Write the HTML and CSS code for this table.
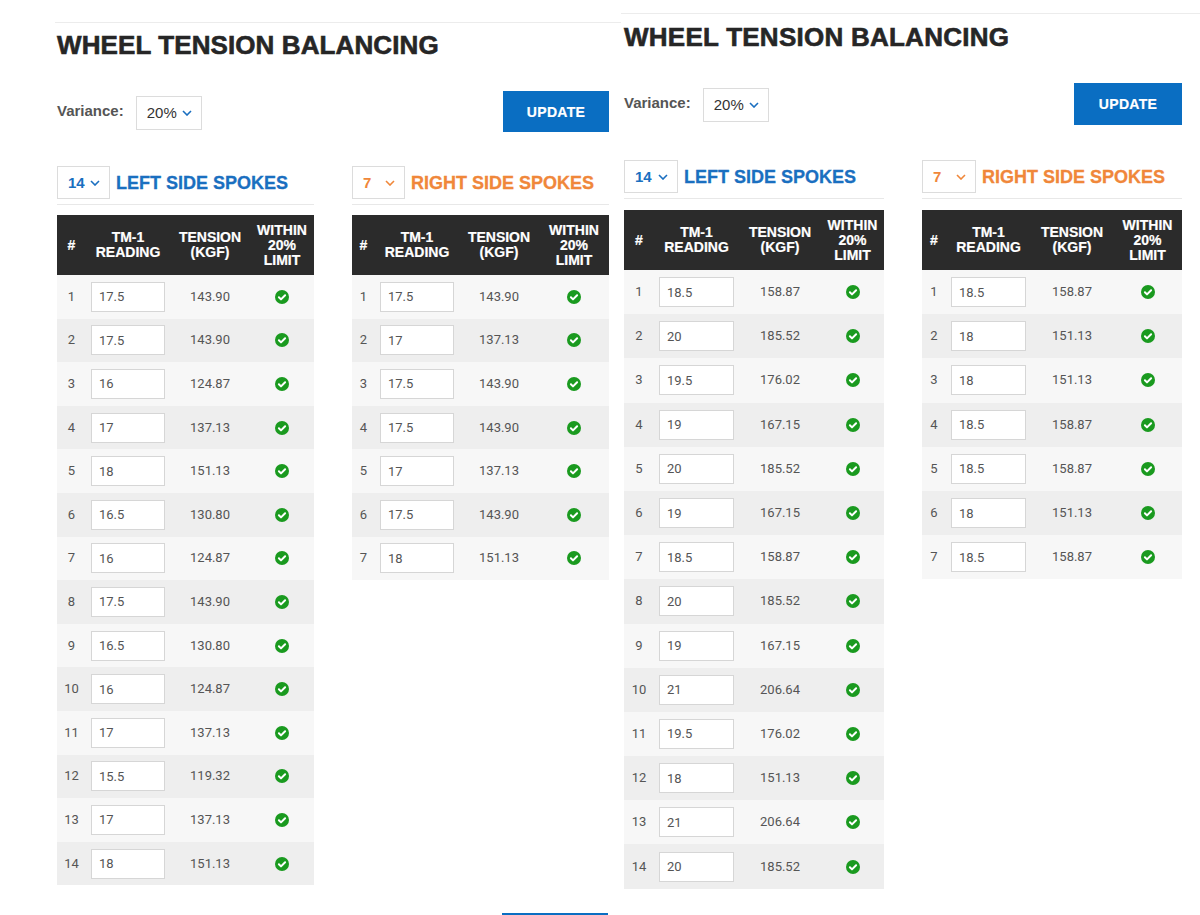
FILE: index.html
```html
<!DOCTYPE html>
<html lang="en">
<head>
<meta charset="utf-8">
<title>Wheel Tension Balancing</title>
<link rel="stylesheet" href="styles.css">
</head>
<body>
<div class="screens">

  <section class="screen screen-a">
    <div class="page">
      <h1 class="title">WHEEL TENSION BALANCING</h1>
      <div class="controls">
        <div class="variance">
          <span class="variance-label">Variance:</span>
          <div class="select select-variance"><span>20%</span><svg class="chev" width="10" height="6" viewBox="0 0 10 6"><path d="M1 1l4 4 4-4"/></svg></div>
        </div>
        <button class="btn-update">UPDATE</button>
      </div>
      <div class="sides">
        <div class="side side-left">
          <div class="side-head">
            <div class="select select-count"><span>14</span><svg class="chev" width="10" height="6" viewBox="0 0 10 6"><path d="M1 1l4 4 4-4"/></svg></div>
            <h2 class="side-title">LEFT SIDE SPOKES</h2>
          </div>
          <div class="spoke-table">
            <div class="thead"><div>#</div><div>TM-1<br>READING</div><div>TENSION<br>(KGF)</div><div>WITHIN<br>20%<br>LIMIT</div></div>
            <div class="tbody">
              <div class="row"><div class="c-num">1</div><div class="c-read"><input class="reading" type="text" value="17.5"></div><div class="c-ten">143.90</div><div class="c-ok"><svg class="ok" width="14" height="14" viewBox="0 0 14 14"><circle cx="7" cy="7" r="7"/><path d="M3.9 7.3l2.1 2.1 4.1-4.2"/></svg></div></div>
              <div class="row"><div class="c-num">2</div><div class="c-read"><input class="reading" type="text" value="17.5"></div><div class="c-ten">143.90</div><div class="c-ok"><svg class="ok" width="14" height="14" viewBox="0 0 14 14"><circle cx="7" cy="7" r="7"/><path d="M3.9 7.3l2.1 2.1 4.1-4.2"/></svg></div></div>
              <div class="row"><div class="c-num">3</div><div class="c-read"><input class="reading" type="text" value="16"></div><div class="c-ten">124.87</div><div class="c-ok"><svg class="ok" width="14" height="14" viewBox="0 0 14 14"><circle cx="7" cy="7" r="7"/><path d="M3.9 7.3l2.1 2.1 4.1-4.2"/></svg></div></div>
              <div class="row"><div class="c-num">4</div><div class="c-read"><input class="reading" type="text" value="17"></div><div class="c-ten">137.13</div><div class="c-ok"><svg class="ok" width="14" height="14" viewBox="0 0 14 14"><circle cx="7" cy="7" r="7"/><path d="M3.9 7.3l2.1 2.1 4.1-4.2"/></svg></div></div>
              <div class="row"><div class="c-num">5</div><div class="c-read"><input class="reading" type="text" value="18"></div><div class="c-ten">151.13</div><div class="c-ok"><svg class="ok" width="14" height="14" viewBox="0 0 14 14"><circle cx="7" cy="7" r="7"/><path d="M3.9 7.3l2.1 2.1 4.1-4.2"/></svg></div></div>
              <div class="row"><div class="c-num">6</div><div class="c-read"><input class="reading" type="text" value="16.5"></div><div class="c-ten">130.80</div><div class="c-ok"><svg class="ok" width="14" height="14" viewBox="0 0 14 14"><circle cx="7" cy="7" r="7"/><path d="M3.9 7.3l2.1 2.1 4.1-4.2"/></svg></div></div>
              <div class="row"><div class="c-num">7</div><div class="c-read"><input class="reading" type="text" value="16"></div><div class="c-ten">124.87</div><div class="c-ok"><svg class="ok" width="14" height="14" viewBox="0 0 14 14"><circle cx="7" cy="7" r="7"/><path d="M3.9 7.3l2.1 2.1 4.1-4.2"/></svg></div></div>
              <div class="row"><div class="c-num">8</div><div class="c-read"><input class="reading" type="text" value="17.5"></div><div class="c-ten">143.90</div><div class="c-ok"><svg class="ok" width="14" height="14" viewBox="0 0 14 14"><circle cx="7" cy="7" r="7"/><path d="M3.9 7.3l2.1 2.1 4.1-4.2"/></svg></div></div>
              <div class="row"><div class="c-num">9</div><div class="c-read"><input class="reading" type="text" value="16.5"></div><div class="c-ten">130.80</div><div class="c-ok"><svg class="ok" width="14" height="14" viewBox="0 0 14 14"><circle cx="7" cy="7" r="7"/><path d="M3.9 7.3l2.1 2.1 4.1-4.2"/></svg></div></div>
              <div class="row"><div class="c-num">10</div><div class="c-read"><input class="reading" type="text" value="16"></div><div class="c-ten">124.87</div><div class="c-ok"><svg class="ok" width="14" height="14" viewBox="0 0 14 14"><circle cx="7" cy="7" r="7"/><path d="M3.9 7.3l2.1 2.1 4.1-4.2"/></svg></div></div>
              <div class="row"><div class="c-num">11</div><div class="c-read"><input class="reading" type="text" value="17"></div><div class="c-ten">137.13</div><div class="c-ok"><svg class="ok" width="14" height="14" viewBox="0 0 14 14"><circle cx="7" cy="7" r="7"/><path d="M3.9 7.3l2.1 2.1 4.1-4.2"/></svg></div></div>
              <div class="row"><div class="c-num">12</div><div class="c-read"><input class="reading" type="text" value="15.5"></div><div class="c-ten">119.32</div><div class="c-ok"><svg class="ok" width="14" height="14" viewBox="0 0 14 14"><circle cx="7" cy="7" r="7"/><path d="M3.9 7.3l2.1 2.1 4.1-4.2"/></svg></div></div>
              <div class="row"><div class="c-num">13</div><div class="c-read"><input class="reading" type="text" value="17"></div><div class="c-ten">137.13</div><div class="c-ok"><svg class="ok" width="14" height="14" viewBox="0 0 14 14"><circle cx="7" cy="7" r="7"/><path d="M3.9 7.3l2.1 2.1 4.1-4.2"/></svg></div></div>
              <div class="row"><div class="c-num">14</div><div class="c-read"><input class="reading" type="text" value="18"></div><div class="c-ten">151.13</div><div class="c-ok"><svg class="ok" width="14" height="14" viewBox="0 0 14 14"><circle cx="7" cy="7" r="7"/><path d="M3.9 7.3l2.1 2.1 4.1-4.2"/></svg></div></div>
            </div>
          </div>
        </div>

        <div class="side side-right">
          <div class="side-head">
            <div class="select select-count"><span>7</span><svg class="chev" width="10" height="6" viewBox="0 0 10 6"><path d="M1 1l4 4 4-4"/></svg></div>
            <h2 class="side-title">RIGHT SIDE SPOKES</h2>
          </div>
          <div class="spoke-table">
            <div class="thead"><div>#</div><div>TM-1<br>READING</div><div>TENSION<br>(KGF)</div><div>WITHIN<br>20%<br>LIMIT</div></div>
            <div class="tbody">
              <div class="row"><div class="c-num">1</div><div class="c-read"><input class="reading" type="text" value="17.5"></div><div class="c-ten">143.90</div><div class="c-ok"><svg class="ok" width="14" height="14" viewBox="0 0 14 14"><circle cx="7" cy="7" r="7"/><path d="M3.9 7.3l2.1 2.1 4.1-4.2"/></svg></div></div>
              <div class="row"><div class="c-num">2</div><div class="c-read"><input class="reading" type="text" value="17"></div><div class="c-ten">137.13</div><div class="c-ok"><svg class="ok" width="14" height="14" viewBox="0 0 14 14"><circle cx="7" cy="7" r="7"/><path d="M3.9 7.3l2.1 2.1 4.1-4.2"/></svg></div></div>
              <div class="row"><div class="c-num">3</div><div class="c-read"><input class="reading" type="text" value="17.5"></div><div class="c-ten">143.90</div><div class="c-ok"><svg class="ok" width="14" height="14" viewBox="0 0 14 14"><circle cx="7" cy="7" r="7"/><path d="M3.9 7.3l2.1 2.1 4.1-4.2"/></svg></div></div>
              <div class="row"><div class="c-num">4</div><div class="c-read"><input class="reading" type="text" value="17.5"></div><div class="c-ten">143.90</div><div class="c-ok"><svg class="ok" width="14" height="14" viewBox="0 0 14 14"><circle cx="7" cy="7" r="7"/><path d="M3.9 7.3l2.1 2.1 4.1-4.2"/></svg></div></div>
              <div class="row"><div class="c-num">5</div><div class="c-read"><input class="reading" type="text" value="17"></div><div class="c-ten">137.13</div><div class="c-ok"><svg class="ok" width="14" height="14" viewBox="0 0 14 14"><circle cx="7" cy="7" r="7"/><path d="M3.9 7.3l2.1 2.1 4.1-4.2"/></svg></div></div>
              <div class="row"><div class="c-num">6</div><div class="c-read"><input class="reading" type="text" value="17.5"></div><div class="c-ten">143.90</div><div class="c-ok"><svg class="ok" width="14" height="14" viewBox="0 0 14 14"><circle cx="7" cy="7" r="7"/><path d="M3.9 7.3l2.1 2.1 4.1-4.2"/></svg></div></div>
              <div class="row"><div class="c-num">7</div><div class="c-read"><input class="reading" type="text" value="18"></div><div class="c-ten">151.13</div><div class="c-ok"><svg class="ok" width="14" height="14" viewBox="0 0 14 14"><circle cx="7" cy="7" r="7"/><path d="M3.9 7.3l2.1 2.1 4.1-4.2"/></svg></div></div>
            </div>
          </div>
        </div>
      </div>
      <div class="footer"><button class="btn-update">UPDATE</button></div>
    </div>
  </section>

  <section class="screen screen-b">
    <div class="page">
      <h1 class="title">WHEEL TENSION BALANCING</h1>
      <div class="controls">
        <div class="variance">
          <span class="variance-label">Variance:</span>
          <div class="select select-variance"><span>20%</span><svg class="chev" width="10" height="6" viewBox="0 0 10 6"><path d="M1 1l4 4 4-4"/></svg></div>
        </div>
        <button class="btn-update">UPDATE</button>
      </div>
      <div class="sides">
        <div class="side side-left">
          <div class="side-head">
            <div class="select select-count"><span>14</span><svg class="chev" width="10" height="6" viewBox="0 0 10 6"><path d="M1 1l4 4 4-4"/></svg></div>
            <h2 class="side-title">LEFT SIDE SPOKES</h2>
          </div>
          <div class="spoke-table">
            <div class="thead"><div>#</div><div>TM-1<br>READING</div><div>TENSION<br>(KGF)</div><div>WITHIN<br>20%<br>LIMIT</div></div>
            <div class="tbody">
              <div class="row"><div class="c-num">1</div><div class="c-read"><input class="reading" type="text" value="18.5"></div><div class="c-ten">158.87</div><div class="c-ok"><svg class="ok" width="14" height="14" viewBox="0 0 14 14"><circle cx="7" cy="7" r="7"/><path d="M3.9 7.3l2.1 2.1 4.1-4.2"/></svg></div></div>
              <div class="row"><div class="c-num">2</div><div class="c-read"><input class="reading" type="text" value="20"></div><div class="c-ten">185.52</div><div class="c-ok"><svg class="ok" width="14" height="14" viewBox="0 0 14 14"><circle cx="7" cy="7" r="7"/><path d="M3.9 7.3l2.1 2.1 4.1-4.2"/></svg></div></div>
              <div class="row"><div class="c-num">3</div><div class="c-read"><input class="reading" type="text" value="19.5"></div><div class="c-ten">176.02</div><div class="c-ok"><svg class="ok" width="14" height="14" viewBox="0 0 14 14"><circle cx="7" cy="7" r="7"/><path d="M3.9 7.3l2.1 2.1 4.1-4.2"/></svg></div></div>
              <div class="row"><div class="c-num">4</div><div class="c-read"><input class="reading" type="text" value="19"></div><div class="c-ten">167.15</div><div class="c-ok"><svg class="ok" width="14" height="14" viewBox="0 0 14 14"><circle cx="7" cy="7" r="7"/><path d="M3.9 7.3l2.1 2.1 4.1-4.2"/></svg></div></div>
              <div class="row"><div class="c-num">5</div><div class="c-read"><input class="reading" type="text" value="20"></div><div class="c-ten">185.52</div><div class="c-ok"><svg class="ok" width="14" height="14" viewBox="0 0 14 14"><circle cx="7" cy="7" r="7"/><path d="M3.9 7.3l2.1 2.1 4.1-4.2"/></svg></div></div>
              <div class="row"><div class="c-num">6</div><div class="c-read"><input class="reading" type="text" value="19"></div><div class="c-ten">167.15</div><div class="c-ok"><svg class="ok" width="14" height="14" viewBox="0 0 14 14"><circle cx="7" cy="7" r="7"/><path d="M3.9 7.3l2.1 2.1 4.1-4.2"/></svg></div></div>
              <div class="row"><div class="c-num">7</div><div class="c-read"><input class="reading" type="text" value="18.5"></div><div class="c-ten">158.87</div><div class="c-ok"><svg class="ok" width="14" height="14" viewBox="0 0 14 14"><circle cx="7" cy="7" r="7"/><path d="M3.9 7.3l2.1 2.1 4.1-4.2"/></svg></div></div>
              <div class="row"><div class="c-num">8</div><div class="c-read"><input class="reading" type="text" value="20"></div><div class="c-ten">185.52</div><div class="c-ok"><svg class="ok" width="14" height="14" viewBox="0 0 14 14"><circle cx="7" cy="7" r="7"/><path d="M3.9 7.3l2.1 2.1 4.1-4.2"/></svg></div></div>
              <div class="row"><div class="c-num">9</div><div class="c-read"><input class="reading" type="text" value="19"></div><div class="c-ten">167.15</div><div class="c-ok"><svg class="ok" width="14" height="14" viewBox="0 0 14 14"><circle cx="7" cy="7" r="7"/><path d="M3.9 7.3l2.1 2.1 4.1-4.2"/></svg></div></div>
              <div class="row"><div class="c-num">10</div><div class="c-read"><input class="reading" type="text" value="21"></div><div class="c-ten">206.64</div><div class="c-ok"><svg class="ok" width="14" height="14" viewBox="0 0 14 14"><circle cx="7" cy="7" r="7"/><path d="M3.9 7.3l2.1 2.1 4.1-4.2"/></svg></div></div>
              <div class="row"><div class="c-num">11</div><div class="c-read"><input class="reading" type="text" value="19.5"></div><div class="c-ten">176.02</div><div class="c-ok"><svg class="ok" width="14" height="14" viewBox="0 0 14 14"><circle cx="7" cy="7" r="7"/><path d="M3.9 7.3l2.1 2.1 4.1-4.2"/></svg></div></div>
              <div class="row"><div class="c-num">12</div><div class="c-read"><input class="reading" type="text" value="18"></div><div class="c-ten">151.13</div><div class="c-ok"><svg class="ok" width="14" height="14" viewBox="0 0 14 14"><circle cx="7" cy="7" r="7"/><path d="M3.9 7.3l2.1 2.1 4.1-4.2"/></svg></div></div>
              <div class="row"><div class="c-num">13</div><div class="c-read"><input class="reading" type="text" value="21"></div><div class="c-ten">206.64</div><div class="c-ok"><svg class="ok" width="14" height="14" viewBox="0 0 14 14"><circle cx="7" cy="7" r="7"/><path d="M3.9 7.3l2.1 2.1 4.1-4.2"/></svg></div></div>
              <div class="row"><div class="c-num">14</div><div class="c-read"><input class="reading" type="text" value="20"></div><div class="c-ten">185.52</div><div class="c-ok"><svg class="ok" width="14" height="14" viewBox="0 0 14 14"><circle cx="7" cy="7" r="7"/><path d="M3.9 7.3l2.1 2.1 4.1-4.2"/></svg></div></div>
            </div>
          </div>
        </div>

        <div class="side side-right">
          <div class="side-head">
            <div class="select select-count"><span>7</span><svg class="chev" width="10" height="6" viewBox="0 0 10 6"><path d="M1 1l4 4 4-4"/></svg></div>
            <h2 class="side-title">RIGHT SIDE SPOKES</h2>
          </div>
          <div class="spoke-table">
            <div class="thead"><div>#</div><div>TM-1<br>READING</div><div>TENSION<br>(KGF)</div><div>WITHIN<br>20%<br>LIMIT</div></div>
            <div class="tbody">
              <div class="row"><div class="c-num">1</div><div class="c-read"><input class="reading" type="text" value="18.5"></div><div class="c-ten">158.87</div><div class="c-ok"><svg class="ok" width="14" height="14" viewBox="0 0 14 14"><circle cx="7" cy="7" r="7"/><path d="M3.9 7.3l2.1 2.1 4.1-4.2"/></svg></div></div>
              <div class="row"><div class="c-num">2</div><div class="c-read"><input class="reading" type="text" value="18"></div><div class="c-ten">151.13</div><div class="c-ok"><svg class="ok" width="14" height="14" viewBox="0 0 14 14"><circle cx="7" cy="7" r="7"/><path d="M3.9 7.3l2.1 2.1 4.1-4.2"/></svg></div></div>
              <div class="row"><div class="c-num">3</div><div class="c-read"><input class="reading" type="text" value="18"></div><div class="c-ten">151.13</div><div class="c-ok"><svg class="ok" width="14" height="14" viewBox="0 0 14 14"><circle cx="7" cy="7" r="7"/><path d="M3.9 7.3l2.1 2.1 4.1-4.2"/></svg></div></div>
              <div class="row"><div class="c-num">4</div><div class="c-read"><input class="reading" type="text" value="18.5"></div><div class="c-ten">158.87</div><div class="c-ok"><svg class="ok" width="14" height="14" viewBox="0 0 14 14"><circle cx="7" cy="7" r="7"/><path d="M3.9 7.3l2.1 2.1 4.1-4.2"/></svg></div></div>
              <div class="row"><div class="c-num">5</div><div class="c-read"><input class="reading" type="text" value="18.5"></div><div class="c-ten">158.87</div><div class="c-ok"><svg class="ok" width="14" height="14" viewBox="0 0 14 14"><circle cx="7" cy="7" r="7"/><path d="M3.9 7.3l2.1 2.1 4.1-4.2"/></svg></div></div>
              <div class="row"><div class="c-num">6</div><div class="c-read"><input class="reading" type="text" value="18"></div><div class="c-ten">151.13</div><div class="c-ok"><svg class="ok" width="14" height="14" viewBox="0 0 14 14"><circle cx="7" cy="7" r="7"/><path d="M3.9 7.3l2.1 2.1 4.1-4.2"/></svg></div></div>
              <div class="row"><div class="c-num">7</div><div class="c-read"><input class="reading" type="text" value="18.5"></div><div class="c-ten">158.87</div><div class="c-ok"><svg class="ok" width="14" height="14" viewBox="0 0 14 14"><circle cx="7" cy="7" r="7"/><path d="M3.9 7.3l2.1 2.1 4.1-4.2"/></svg></div></div>
            </div>
          </div>
        </div>
      </div>
      <div class="footer"><button class="btn-update">UPDATE</button></div>
    </div>
  </section>

</div>
</body>
</html>
```

FILE: styles.css
```css
html, body {
  margin: 0;
  padding: 0;
  background: #ffffff;
  overflow: hidden;
}
body {
  font-family: Roboto, "Liberation Sans", Arial, sans-serif;
  color: #555555;
}

.screens {
  display: flex;
  align-items: flex-start;
  height: 915px;
  overflow: hidden;
}

.screen-a {
  margin-left: 55px;
  width: 566px;
  padding-top: 22px;
  flex: none;
}
.screen-b {
  width: 579px;
  padding-top: 13px;
  flex: none;
}

.page {
  border-top: 1px solid #ececec;
}
.screen-a .page {
  padding: 0 12px 0 2px;
}
.screen-b .page {
  padding: 0 18px 0 3px;
}

.title {
  margin: 7px 0 0;
  font: 700 26px/30px "Liberation Sans", Arial, sans-serif;
  color: #262626;
  letter-spacing: 0.1px;
  -webkit-text-stroke: 0.6px #262626;
}
.screen-b .title {
  margin-top: 8px;
  letter-spacing: 0.25px;
}

.controls {
  display: flex;
  justify-content: space-between;
  align-items: center;
  margin-top: 31px;
}

.variance {
  display: flex;
  align-items: center;
  gap: 12px;
  padding-top: 2px;
}
.variance-label {
  font: 700 15px/18px "Liberation Sans", Arial, sans-serif;
  color: #555555;
  margin-top: -4px;
}

.select {
  display: flex;
  align-items: center;
  justify-content: space-between;
  box-sizing: border-box;
  border: 1px solid #dcdcdc;
  background: #ffffff;
}
.select-variance {
  width: 66px;
  height: 34px;
  padding: 0 9px 0 10px;
  font: 400 15px/18px "Liberation Sans", Arial, sans-serif;
  color: #333333;
}
.select-variance .chev {
  color: #1a6fc0;
}

.chev {
  display: block;
}
.chev path {
  fill: none;
  stroke: currentColor;
  stroke-width: 1.6;
}

.btn-update {
  width: 106px;
  height: 41px;
  padding: 0;
  border: 0;
  background: #0a6ec2;
  color: #ffffff;
  font: 700 14px/16px "Liberation Sans", Arial, sans-serif;
  letter-spacing: 0.3px;
  -webkit-text-stroke: 0.2px #ffffff;
}
.screen-b .btn-update {
  width: 108px;
  height: 42px;
}

.sides {
  display: flex;
  gap: 38px;
  margin-top: 34px;
}
.screen-b .sides {
  margin-top: 35px;
}

.side {
  width: 257px;
  flex: none;
}
.screen-b .side {
  width: 260px;
}
.side-left {
  color: #1a6fc0;
}
.side-right {
  color: #f0873a;
}

.side-head {
  display: flex;
  align-items: center;
  gap: 6px;
  padding-bottom: 5px;
  border-bottom: 1px solid #e8e8e8;
  margin-bottom: 10px;
}
.screen-b .side-head {
  margin-bottom: 11px;
}

.select-count {
  width: 53px;
  height: 33px;
  padding: 0 9px 0 10px;
  font: 700 15px/18px "Liberation Sans", Arial, sans-serif;
}
.screen-b .select-count {
  width: 54px;
}

.side-title {
  margin: 0;
  font: 700 18px/20px "Liberation Sans", Arial, sans-serif;
  -webkit-text-stroke: 0.3px currentColor;
}

.spoke-table {
  --cols: 29px 84px 80px 64px;
  --row-h: 43.6px;
  --input-w: 74px;
}
.screen-a .side-right .spoke-table {
  --cols: 23px 84px 80px 70px;
}
.screen-b .side-left .spoke-table {
  --cols: 30px 85px 82px 63px;
  --row-h: 44.2px;
  --input-w: 75px;
}
.screen-b .side-right .spoke-table {
  --cols: 24px 85px 82px 69px;
  --row-h: 44.2px;
  --input-w: 75px;
}

.thead {
  display: grid;
  grid-template-columns: var(--cols);
  align-items: center;
  height: 60px;
  background: #2b2b2b;
  color: #ffffff;
  font: 700 14px/15px "Liberation Sans", Arial, sans-serif;
  text-align: center;
  -webkit-text-stroke: 0.2px #ffffff;
}

.row {
  display: grid;
  grid-template-columns: var(--cols);
  align-items: center;
  height: var(--row-h);
  font: 400 13px/16px Roboto, "Liberation Sans", Arial, sans-serif;
  color: #555555;
}
.row:nth-child(odd) {
  background: #f7f7f7;
}
.row:nth-child(even) {
  background: #eeeeee;
}

.c-num {
  text-align: center;
}
.c-read {
  padding-left: 5px;
}
.c-ten {
  text-align: center;
}
.c-ok {
  display: flex;
  justify-content: center;
}

.reading {
  display: block;
  box-sizing: border-box;
  width: var(--input-w);
  height: 30px;
  margin: 0;
  padding: 0 0 0 7px;
  border: 1px solid #d6d6d6;
  border-radius: 0;
  background: #ffffff;
  font: 400 13px/16px Roboto, "Liberation Sans", Arial, sans-serif;
  color: #555555;
  outline: none;
}

.ok {
  display: block;
}
.ok circle {
  fill: #1a9a1f;
}
.ok path {
  fill: none;
  stroke: #ffffff;
  stroke-width: 2;
  stroke-linecap: round;
  stroke-linejoin: round;
}

.footer {
  display: flex;
  justify-content: flex-end;
  margin-top: 28px;
  padding-right: 1px;
}
```
